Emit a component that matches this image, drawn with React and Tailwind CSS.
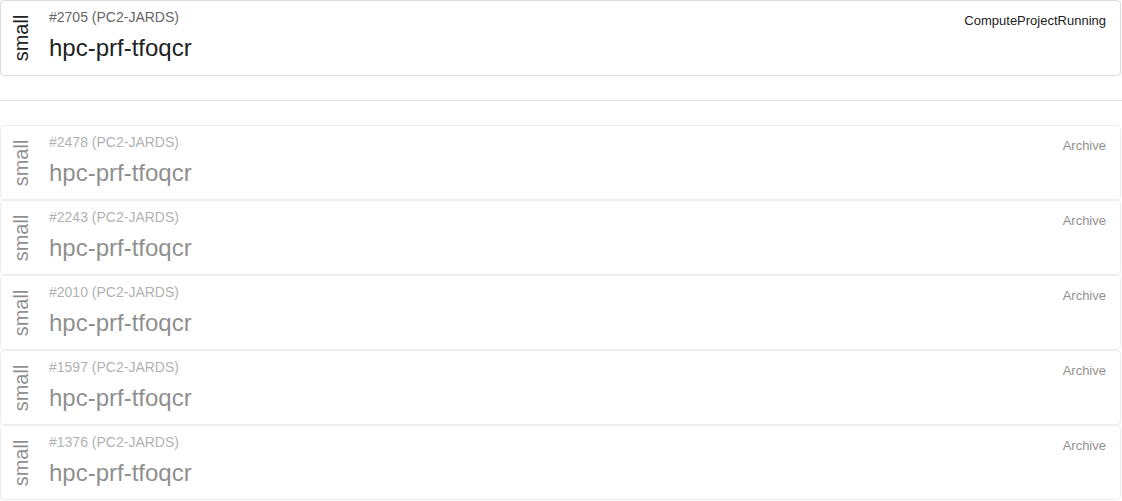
import React from "react";

const projects = [
  { id: 2478 },
  { id: 2243 },
  { id: 2010 },
  { id: 1597 },
  { id: 1376 },
];

// One row: rotated size label on the left, id + name in the middle, state on the right
const ProjectCard = ({ id, name, state, archived }) => (
  <div
    className={
      "flex rounded border border-[#dcdcdc] bg-white " +
      (archived ? "h-[75px] opacity-50" : "h-[76px]")
    }
  >
    <div className="flex w-[41px] shrink-0 items-center justify-center">
      <span className="block -rotate-90 whitespace-nowrap text-[20px] leading-[28px] text-[#222]">
        small
      </span>
    </div>
    <div className="flex min-w-0 flex-1 flex-col pl-[7px] pt-[6px]">
      <div className="text-[14px] leading-[20px] text-[#666]">
        #{id} (PC2-JARDS)
      </div>
      <div className="mt-[5px] text-[24px] leading-[32px] text-[#222]">{name}</div>
    </div>
    <div className="shrink-0 pr-[14px] pt-[11px] text-[13px] leading-[18px] text-[#222]">
      {state}
    </div>
  </div>
);

export default function App() {
  return (
    <div
      className="w-[1122px] bg-white pr-px"
      style={{ fontFamily: '"Liberation Sans", Arial, sans-serif' }}
    >
      <ProjectCard id={2705} name="hpc-prf-tfoqcr" state="ComputeProjectRunning" />
      <hr className="mr-[-1px] mb-6 mt-6 border-t border-[#e2e2e2]" />
      <div className="flex flex-col">
        {projects.map((p) => (
          <ProjectCard key={p.id} id={p.id} name="hpc-prf-tfoqcr" state="Archive" archived />
        ))}
      </div>
    </div>
  );
}
